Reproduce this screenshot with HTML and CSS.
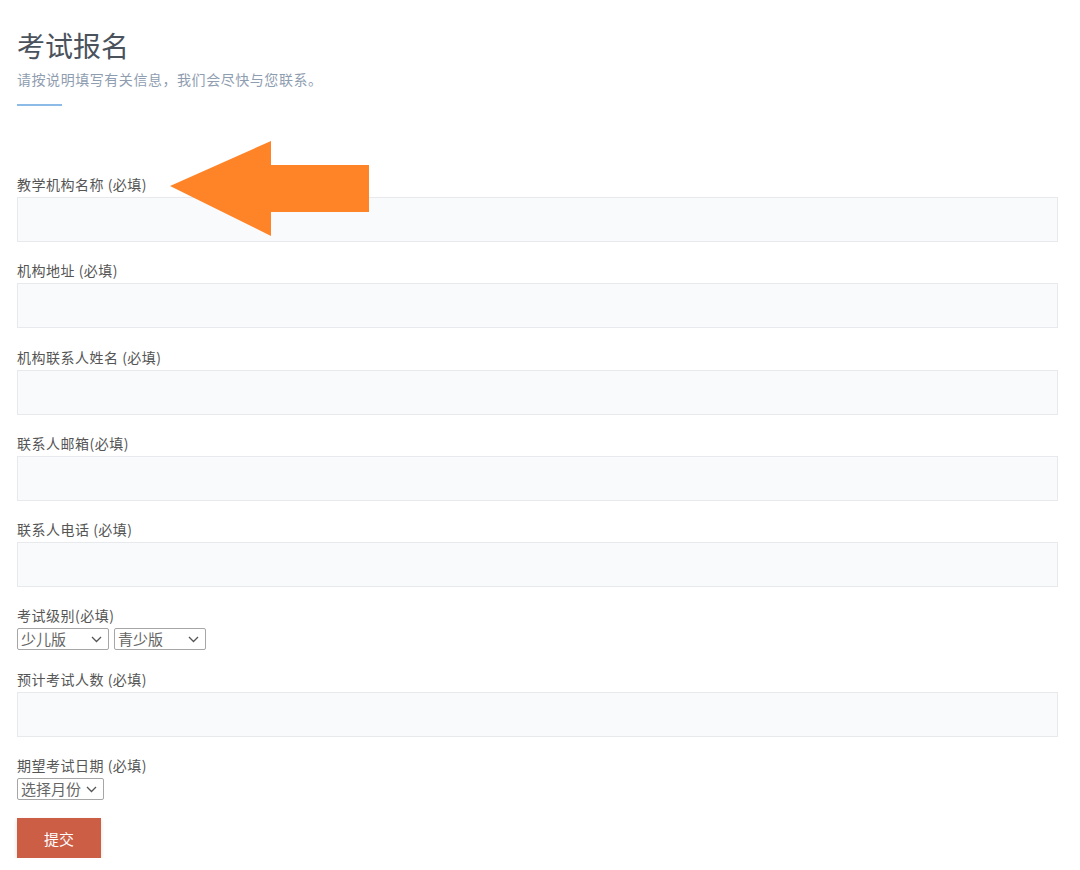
FILE: index.html
```html
<!DOCTYPE html>
<html lang="zh">

<head>
  <meta charset="UTF-8">
  <meta name="viewport" content="width=device-width, initial-scale=1.0">
  <title>考试报名</title>
  <link rel="stylesheet" href="styles.css">
</head>

<body>
  <main class="signup">
    <header class="signup-head">
      <h1>考试报名</h1>
      <p>请按说明填写有关信息，我们会尽快与您联系。</p>
      <div class="head-line"></div>
    </header>

    <form class="signup-form" onsubmit="return false">
      <div class="field">
        <label for="org">教学机构名称 (必填)</label>
        <input type="text" id="org">
      </div>

      <div class="field">
        <label for="addr">机构地址 (必填)</label>
        <input type="text" id="addr">
      </div>

      <div class="field">
        <label for="contact">机构联系人姓名 (必填)</label>
        <input type="text" id="contact">
      </div>

      <div class="field">
        <label for="email">联系人邮箱(必填)</label>
        <input type="text" id="email">
      </div>

      <div class="field">
        <label for="phone">联系人电话 (必填)</label>
        <input type="text" id="phone">
      </div>

      <div class="field">
        <label for="level">考试级别(必填)</label>
        <div class="select-row">
          <span class="select-wrap sel-level">
            <select id="level">
              <option>少儿版</option>
            </select>
            <svg class="chevron" width="11" height="7" viewBox="0 0 11 7"><polyline points="1,1 5.5,5.5 10,1" fill="none" stroke="#555" stroke-width="1.3" /></svg>
          </span>
          <span class="select-wrap sel-level">
            <select>
              <option>青少版</option>
            </select>
            <svg class="chevron" width="11" height="7" viewBox="0 0 11 7"><polyline points="1,1 5.5,5.5 10,1" fill="none" stroke="#555" stroke-width="1.3" /></svg>
          </span>
        </div>
      </div>

      <div class="field">
        <label for="count">预计考试人数 (必填)</label>
        <input type="text" id="count">
      </div>

      <div class="field">
        <label for="month">期望考试日期 (必填)</label>
        <div class="select-row">
          <span class="select-wrap sel-month">
            <select id="month">
              <option>选择月份</option>
            </select>
            <svg class="chevron" width="11" height="7" viewBox="0 0 11 7"><polyline points="1,1 5.5,5.5 10,1" fill="none" stroke="#555" stroke-width="1.3" /></svg>
          </span>
        </div>
      </div>

      <button type="submit" class="submit-btn">提交</button>
    </form>

    <!-- orange pointer arrow -->
    <svg class="pointer" width="200" height="96" viewBox="0 0 200 96">
      <polygon points="0,45 101,0 101,24 199,24 199,71 101,71 101,95" fill="#ff8427" />
    </svg>
  </main>
</body>

</html>
```

FILE: styles.css
```css
/* Basic styling */
body {
  margin: 0;
  font-family: "Noto Sans CJK SC", "Noto Sans", sans-serif;
  background-color: #fff;
  color: #555;
}

.signup {
  position: relative;
  padding: 26px 22px 0 17px;
}

.signup-head h1 {
  margin: 0;
  font-size: 28px;
  font-weight: 400;
  line-height: 38px;
  color: #4a525c;
}

.signup-head p {
  margin: 5px 0 0;
  font-size: 14px;
  line-height: 20px;
  letter-spacing: 0.55px;
  color: #8f9db0;
}

.head-line {
  width: 45px;
  height: 2px;
  margin-top: 15px;
  background-color: #8cbbe8;
}

.signup-form {
  margin-top: 68px;
}

.field {
  margin-bottom: 18.25px;
}

.field label {
  display: block;
  font-size: 14px;
  line-height: 20px;
  letter-spacing: 0.5px;
  color: #555;
  margin-bottom: 3px;
}

.field input {
  display: block;
  box-sizing: border-box;
  width: 100%;
  height: 45px;
  margin: 0;
  padding: 0 10px;
  border: 1px solid #e7e9ec;
  background-color: #f9fafc;
  font-family: inherit;
}

.select-row {
  display: flex;
  gap: 5px;
}

.select-wrap {
  position: relative;
  display: block;
}

.select-wrap select {
  display: block;
  box-sizing: border-box;
  width: 100%;
  height: 22px;
  margin: 0;
  padding: 0 20px 0 3px;
  appearance: none;
  -webkit-appearance: none;
  font-family: inherit;
  font-size: 15px;
  line-height: 20px;
  color: #666;
  background-color: #fff;
  border: 1px solid #a6a6a6;
  border-radius: 2px;
}

.chevron {
  position: absolute;
  right: 7px;
  top: 8px;
  pointer-events: none;
}

.sel-level {
  width: 92px;
}

.sel-month {
  width: 87px;
}

.submit-btn {
  display: block;
  width: 84px;
  height: 40px;
  border: none;
  background-color: #cd5e46;
  color: #fff;
  font-family: inherit;
  font-size: 15px;
  box-shadow: 0 2px 4px rgba(0, 0, 0, 0.15);
  cursor: pointer;
}

.pointer {
  position: absolute;
  left: 170px;
  top: 141px;
}
```
